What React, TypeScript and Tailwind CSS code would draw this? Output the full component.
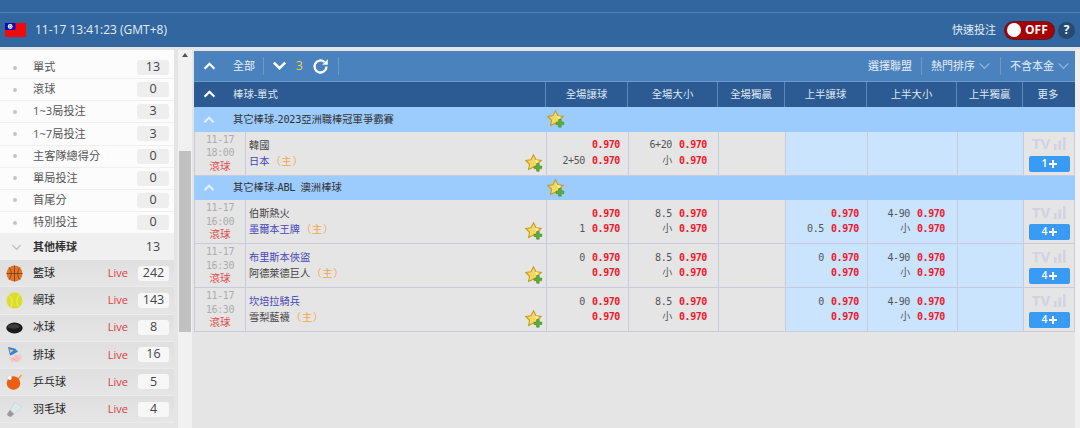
import React from "react";

const CJK = "font-['Open_Sans','Noto_Sans_CJK_TC',sans-serif]";
const MONO = "font-['DejaVu_Sans_Mono','Noto_Sans_CJK_TC',monospace]";

const cols = ["w-[52px]", "w-[301px]", "w-[82px]", "w-[90px]", "w-[67px]", "w-[82px]", "w-[90px]", "w-[66px]", "w-[51px]"];

function Chevron({ up = true, className = "", size = 14, color = "#fff", sw = 2.4 }: { up?: boolean; className?: string; size?: number; color?: string; sw?: number }) {
  return (
    <svg width={size} height={size * 0.62} viewBox="0 0 14 9" className={className} fill="none">
      <path d={up ? "M1.5 7.5 7 2l5.5 5.5" : "M1.5 1.5 7 7l5.5-5.5"} stroke={color} strokeWidth={sw} />
    </svg>
  );
}

function Star({ className = "" }: { className?: string }) {
  return (
    <svg width="18" height="18" viewBox="0 0 17 17" className={className}>
      <path d="M8 .8l2.3 4.6 5 .7-3.6 3.6.9 5-4.6-2.4-4.6 2.4.9-5L.7 6.1l5-.7z" fill="#f8d95f" stroke="#c89a1e" strokeWidth="1" />
      <path d="M8 2.6l1.6 3.3 3.5.5-2.5 2.4" fill="#fff3b0" />
      <path d="M11 9h2.4v2.4h2.4v2.4h-2.4v2.4H11v-2.4H8.6v-2.4H11z" fill="#5cae3c" stroke="#3f8f2b" strokeWidth=".6" />
    </svg>
  );
}

function Flag() {
  return (
    <svg width="21" height="14" viewBox="0 0 21 14">
      <rect width="21" height="14" fill="#f00a0a" />
      <rect width="10.5" height="7" fill="#0a0ab8" />
      <circle cx="5.2" cy="3.5" r="2.4" fill="#fff" />
      <circle cx="5.2" cy="3.5" r="1.3" fill="#0a0ab8" />
      <circle cx="5.2" cy="3.5" r="1" fill="#fff" />
    </svg>
  );
}

function Basket() {
  return (
    <svg width="17" height="17" viewBox="0 0 17 17">
      <circle cx="8.5" cy="8.5" r="8" fill="#e0762a" />
      <path d="M.5 8.5h16M8.5.5v16M3 2.5c3 3 3 9 0 12M14 2.5c-3 3-3 9 0 12" stroke="#7a3a10" strokeWidth=".8" fill="none" />
    </svg>
  );
}
function Tennis() {
  return (
    <svg width="17" height="17" viewBox="0 0 17 17">
      <circle cx="8.5" cy="8.5" r="8" fill="#d9de2c" />
      <path d="M2 3c4 2 5 7 3 12M15 2c-4 2-5 7-3 12" stroke="#eef27a" strokeWidth=".9" fill="none" />
    </svg>
  );
}
function Puck() {
  return (
    <svg width="17" height="12" viewBox="0 0 17 12">
      <ellipse cx="8.5" cy="6" rx="8.2" ry="5.4" fill="#1b1b1b" />
      <ellipse cx="7.5" cy="4.4" rx="6" ry="2.4" fill="#3c3c3c" />
    </svg>
  );
}
function Volley() {
  return (
    <svg width="17" height="17" viewBox="0 0 17 17">
      <path d="M2 1l7 1.5 3 3-5 3-3 1z" fill="#3b82d8" />
      <path d="M3.5 3.5l4 .6-3 3z" fill="#f5d24a" />
      <path d="M3 9l3 3 4-3 5-1 1 4-3 4H5z" fill="#f3c9c9" />
      <path d="M6 12l5 3M9 9.5l4 4" stroke="#e7a0a0" strokeWidth=".7" />
    </svg>
  );
}
function Pong() {
  return (
    <svg width="17" height="17" viewBox="0 0 17 17">
      <path d="M11 6l4-4.5 1.2 1L12 7z" fill="#e8a33a" />
      <circle cx="7.5" cy="10" r="6.8" fill="#ec5f12" />
      <circle cx="3.8" cy="5" r="1.9" fill="#fff" />
    </svg>
  );
}
function Shuttle() {
  return (
    <svg width="17" height="17" viewBox="0 0 17 17">
      <path d="M9 1l7 5-8 7-4-4z" fill="#dfe7ea" stroke="#c3ced2" strokeWidth=".6" />
      <path d="M4 9l4 4-3 3-3-1-1-2z" fill="#9a9a9a" />
    </svg>
  );
}

function Toggle() {
  return (
    <div className="relative flex h-[17px] w-[49px] items-center rounded-full bg-[#a80000] shadow-[0_0_0_1px_#5a1a2a]">
      <span className="absolute left-[2px] h-[14px] w-[14px] rounded-full bg-white" />
      <span className={`absolute left-[20px] text-[12px] font-bold leading-none text-white ${CJK}`}>OFF</span>
    </div>
  );
}

const subRows: [string, string][] = [
  ["單式", "13"],
  ["滾球", "0"],
  ["1~3局投注", "3"],
  ["1~7局投注", "3"],
  ["主客隊總得分", "0"],
  ["單局投注", "0"],
  ["首尾分", "0"],
  ["特別投注", "0"],
];

const sports: [React.ReactNode, string, string][] = [
  [<Basket />, "籃球", "242"],
  [<Tennis />, "網球", "143"],
  [<Puck />, "冰球", "8"],
  [<Volley />, "排球", "16"],
  [<Pong />, "乒乓球", "5"],
  [<Shuttle />, "羽毛球", "4"],
];

function Sidebar() {
  return (
    <div className="w-[174px] shrink-0 overflow-hidden">
      <div className="flex flex-col bg-[#fcfcfc] pt-[7px]">
        {subRows.map(([n, c]) => (
          <div key={n} className="flex h-[22.15px] items-center border-b border-[#efefef] pl-[13px] pr-[5px]">
            <span className="h-[4px] w-[4px] rounded-full bg-[#c4c4c4]" />
            <span className="ml-[16px] flex-1 text-[11.2px] text-[#555]">{n}</span>
            <span className="flex h-[15px] w-[32px] items-center justify-center rounded-[3px] bg-[#eeeeee] text-[12.5px] text-[#444]">{c}</span>
          </div>
        ))}
      </div>
      <div className="flex h-[26px] items-center bg-[#f0f0f0] pl-[11px] pr-[5px]">
        <Chevron up={false} color="#bdbdbd" size={11} sw={1.8} />
        <span className="ml-[11px] flex-1 text-[11px] font-bold text-[#333]">其他棒球</span>
        <span className="flex w-[32px] justify-center text-[12.5px] text-[#444]">13</span>
      </div>
      {sports.map(([ic, n, c]) => (
        <div key={n} className="flex h-[27.2px] items-center border-b border-[#ececec] bg-gradient-to-b from-[#dfdfdf] to-[#e6e6e6] pl-[6px] pr-[5px]">
          <span className="flex w-[17px] justify-center">{ic}</span>
          <span className="ml-[10px] flex-1 text-[11px] text-[#222]">{n}</span>
          <span className="mr-[10px] text-[11px] text-[#e8383d]">Live</span>
          <span className="flex h-[15px] w-[31px] items-center justify-center rounded-[3px] bg-[#f7f7f7] text-[12.5px] text-[#444]">{c}</span>
        </div>
      ))}
    </div>
  );
}

function Scrollbar() {
  return (
    <div className="ml-[4px] flex w-[14px] shrink-0 flex-col items-center bg-[#f1f1f1]">
      <div className="mt-[3px] h-0 w-0 border-x-[3px] border-b-[4px] border-x-transparent border-b-[#505050]" />
      <div className="mt-[94px] h-[181px] w-[12px] bg-[#c1c1c1]" />
    </div>
  );
}

type Odd = [string, string];
type Match = {
  date: string;
  time: string;
  home: string;
  homeBlue: boolean;
  away: string;
  awayBlue: boolean;
  more: string;
  cells: Odd[][];
};

function OddCell({ rows, w, blue, pr }: { rows?: Odd[]; w: string; blue: boolean; pr: string }) {
  return (
    <div className={`${w} ${pr} flex shrink-0 flex-col justify-center gap-[1.5px] border-r border-[#c9c9df] ${blue ? "bg-[#cae4fd]" : ""}`}>
      {rows?.map(([a, b], i) => (
        <div key={i} className={`flex h-[14px] items-center justify-end gap-[7px] text-[10px] leading-none tracking-[-0.4px] ${MONO}`}>
          <span className="text-[#555]">{a}</span>
          <span className="font-bold text-[#f0172a]">{b}</span>
        </div>
      ))}
    </div>
  );
}

function MatchRow({ m }: { m: Match }) {
  const [c1, c2, c3, c4] = m.cells;
  return (
    <div className="flex h-[44px] border-b border-[#c9c9df]">
      <div className={`${cols[0]} flex shrink-0 flex-col items-center justify-center border-x border-[#c9c9df] text-[10px] leading-[13.5px] tracking-[-0.4px] text-[#acacac] ${MONO}`}>
        <span>{m.date}</span>
        <span>{m.time}</span>
        <span className={`text-[10.5px] tracking-normal text-[#e0484c] ${CJK}`}>滾球</span>
      </div>
      <div className={`${cols[1]} relative flex shrink-0 flex-col justify-center gap-[1px] border-r border-[#c9c9df] pl-[3px] text-[10.2px] leading-[15px]`}>
        <div className={m.homeBlue ? "text-[#4848b8]" : "text-[#444]"}>{m.home}</div>
        <div className={m.awayBlue ? "text-[#4848b8]" : "text-[#444]"}>
          {m.away}
          <span className="ml-[1px] tracking-[1px] text-[#f5a548]">（主）</span>
        </div>
        <Star className="absolute bottom-[3px] right-[3px]" />
      </div>
      <OddCell w={cols[2]} pr="pr-[8px]" rows={c1} blue={false} />
      <OddCell w={cols[3]} pr="pr-[11px]" rows={c2} blue={false} />
      <div className={`${cols[4]} shrink-0 border-r border-[#c9c9df]`} />
      <OddCell w={cols[5]} pr="pr-[8px]" rows={c3} blue />
      <OddCell w={cols[6]} pr="pr-[12px]" rows={c4} blue />
      <div className={`${cols[7]} shrink-0 border-r border-[#c9c9df] bg-[#cae4fd]`} />
      <div className={`${cols[8]} flex shrink-0 flex-col items-center gap-[5px] border-r border-[#c9c9df] pt-[5px]`}>
        <div className="flex h-[14px] items-center gap-[4px]">
          <span className={`text-[15px] font-bold leading-none text-[#d2d2e2] ${CJK}`}>TV</span>
          <svg width="12" height="13" viewBox="0 0 12 13">
            <rect x="0" y="7" width="2.6" height="6" fill="#d2d2e2" />
            <rect x="4.5" y="3.5" width="2.6" height="9.5" fill="#d2d2e2" />
            <rect x="9" y="0" width="2.6" height="13" fill="#d2d2e2" />
          </svg>
        </div>
        <div className={`flex h-[16px] w-[41px] items-center justify-center gap-[1px] rounded-[2px] bg-[#3a9bf4] text-[10.5px] font-semibold text-white ${CJK}`}>
          {m.more}
          <svg width="8" height="8" viewBox="0 0 8 8">
            <path d="M3 0h2v3h3v2H5v3H3V5H0V3h3z" fill="#fff" />
          </svg>
        </div>
      </div>
    </div>
  );
}

function League({ title }: { title: React.ReactNode }) {
  return (
    <div className="flex h-[24.5px] items-center bg-[#9ccbfd]">
      <div className="flex w-[353px] shrink-0 items-center">
        <Chevron className="ml-[9px]" color="#e6f2ff" size={12} />
        <span className="ml-[18px] text-[10.3px] text-[#333]">{title}</span>
      </div>
      <Star />
    </div>
  );
}

const T: Odd[] = [["", "0.970"], ["2+50", "0.970"]];
const A: Odd[] = [["0", "0.970"], ["", "0.970"]];
const Big: Odd[] = [["8.5", "0.970"], ["小", "0.970"]];
const Half: Odd[] = [["4-90", "0.970"], ["小", "0.970"]];

const headers = ["全場讓球", "全場大小", "全場獨贏", "上半讓球", "上半大小", "上半獨贏", "更多"];

export default function App() {
  return (
    <div className={`flex h-[428px] w-[1080px] flex-col overflow-hidden bg-[#e5e5e5] text-[12px] ${CJK}`}>
      <header className="h-[47px] shrink-0 bg-[#32669f]">
        <div className="h-[13px] border-b border-[#4c80b6]" />
        <div className="flex h-[34px] items-center pl-[5px] pr-[5px]">
          <Flag />
          <span className="ml-[9px] text-[12px] text-[#e4edf6]">11-17 13:41:23 (GMT+8)</span>
          <span className="ml-auto text-[11px] text-[#e4edf6]">快速投注</span>
          <div className="ml-[9px]"><Toggle /></div>
          <span className="ml-[4px] flex h-[17px] w-[17px] items-center justify-center rounded-full bg-[#264a72] text-[12px] font-bold text-white">?</span>
        </div>
      </header>
      <div className="flex min-h-0 flex-1 pt-[3px]">
        <Sidebar />
        <Scrollbar />
        <main className="ml-[2px] w-[881px] shrink-0 pt-[1px]">
          <div className="flex h-[31px] items-center border-b border-[#6d9acb] bg-[#4a82bd] text-[11px] text-[#e6eef7]">
            <Chevron className="ml-[9px]" size={13} />
            <span className="ml-[17px]">全部</span>
            <span className="ml-[8px] h-[18px] w-px bg-[#6d9acb]" />
            <Chevron up={false} size={15} className="ml-[8px]" />
            <span className="ml-[9px] text-[12px] text-[#e6d34a]">3</span>
            <svg width="17" height="17" viewBox="0 0 17 17" className="ml-[9px]" fill="none">
              <path d="M14.5 8.5a6 6 0 1 1-2-4.5" stroke="#fff" strokeWidth="2.3" />
              <path d="M15.8 1.2v5.6h-5.6z" fill="#fff" />
            </svg>
            <span className="ml-[9px] h-[18px] w-px bg-[#6d9acb]" />
            <span className="ml-auto">選擇聯盟</span>
            <span className="mx-[9px] h-[18px] w-px bg-[#6d9acb]" />
            <span>熱門排序</span>
            <Chevron up={false} color="#8fb3d9" size={13} sw={1.4} className="ml-[3px]" />
            <span className="mx-[9px] h-[18px] w-px bg-[#6d9acb]" />
            <span>不含本金</span>
            <Chevron up={false} color="#8fb3d9" size={13} sw={1.4} className="ml-[3px] mr-[5px]" />
          </div>
          <div className="flex h-[25px] items-center bg-[#2c5a93] text-[10.4px] text-[#dfe8f2]">
            <div className="flex w-[351px] shrink-0 items-center">
              <Chevron className="ml-[9px]" size={13} />
              <span className="ml-[17px]">棒球-單式</span>
            </div>
            {headers.map((h, i) => (
              <div key={h} className={`${cols[i + 2]} flex h-full shrink-0 items-center justify-center border-l border-[#5d88ba]`}>{h}</div>
            ))}
          </div>
          <League title={<>其它棒球-<span className={`tracking-[-0.3px] ${MONO}`}>2023</span>亞洲職棒冠軍爭霸賽</>} />
          <MatchRow
            m={{
              date: "11-17", time: "18:00", home: "韓國", homeBlue: false, away: "日本", awayBlue: true, more: "1",
              cells: [T, [["6+20", "0.970"], ["小", "0.970"]], [], []],
            }}
          />
          <League title={<>其它棒球-<span className={`tracking-[-0.3px] ${MONO}`}>ABL</span>&nbsp;&nbsp;澳洲棒球</>} />
          <MatchRow
            m={{
              date: "11-17", time: "16:00", home: "伯斯熱火", homeBlue: false, away: "墨爾本王牌", awayBlue: true, more: "4",
              cells: [[["", "0.970"], ["1", "0.970"]], Big, [["", "0.970"], ["0.5", "0.970"]], Half],
            }}
          />
          <MatchRow
            m={{
              date: "11-17", time: "16:30", home: "布里斯本俠盜", homeBlue: true, away: "阿德萊德巨人", awayBlue: false, more: "4",
              cells: [A, Big, A, Half],
            }}
          />
          <MatchRow
            m={{
              date: "11-17", time: "16:30", home: "坎培拉騎兵", homeBlue: true, away: "雪梨藍襪", awayBlue: false, more: "4",
              cells: [A, Big, A, Half],
            }}
          />
        </main>
        <div className="ml-auto w-[5px] bg-[#f0f0f0]" />
      </div>
    </div>
  );
}
